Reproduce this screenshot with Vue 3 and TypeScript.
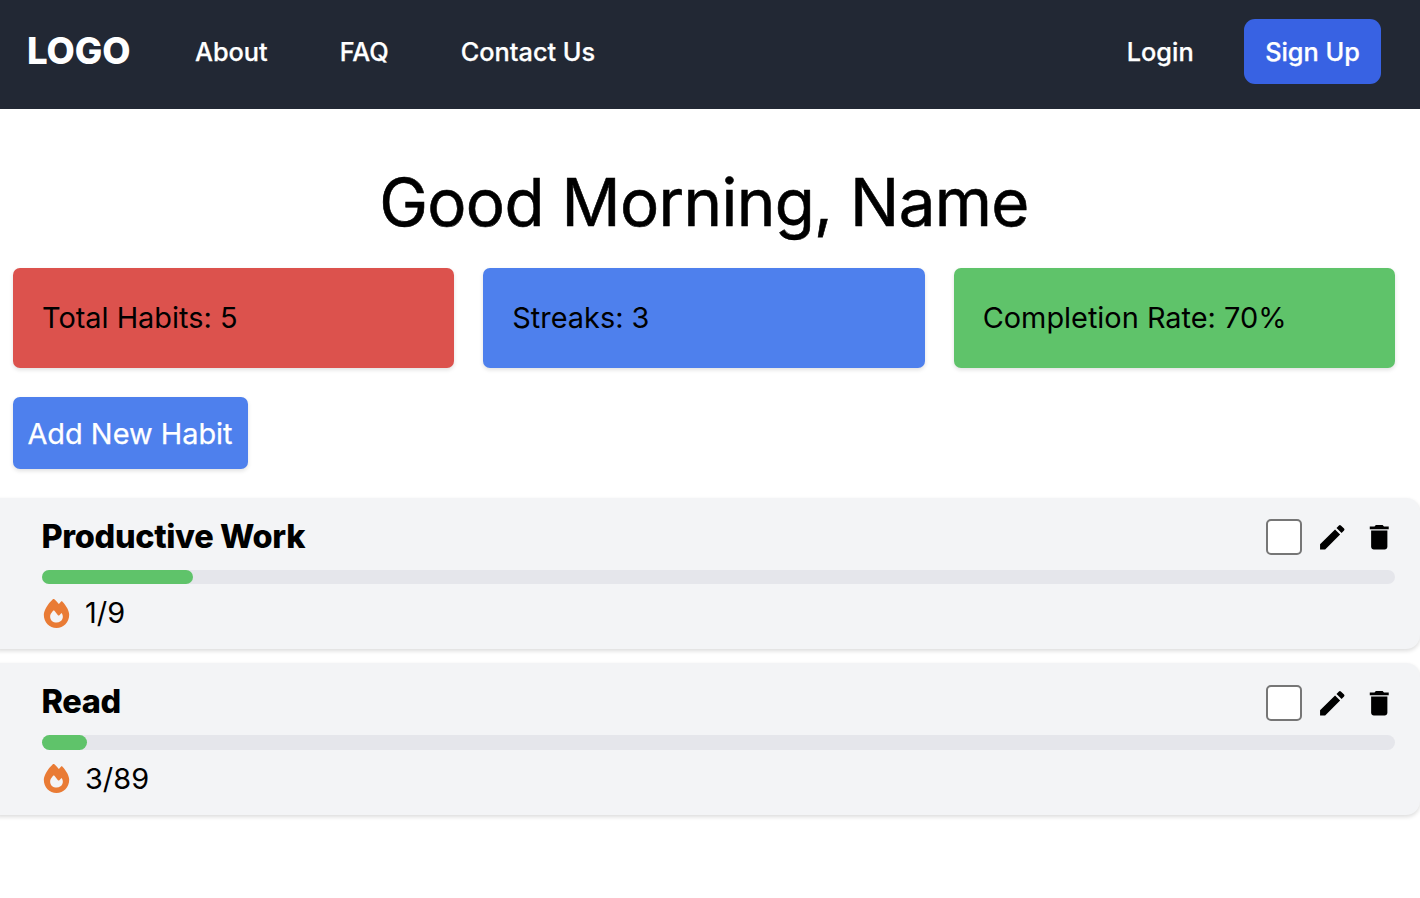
<script setup lang="ts">
interface Stat {
  label: string
  tone: string
}

interface Habit {
  name: string
  done: number
  goal: number
}

const links: string[] = ['About', 'FAQ', 'Contact Us']

const stats: Stat[] = [
  { label: 'Total Habits: 5', tone: 'red' },
  { label: 'Streaks: 3', tone: 'blue' },
  { label: 'Completion Rate: 70%', tone: 'green' },
]

const habits: Habit[] = [
  { name: 'Productive Work', done: 1, goal: 9 },
  { name: 'Read', done: 3, goal: 89 },
]

const progress = (habit: Habit): string => `${Math.floor((habit.done / habit.goal) * 1000) / 10 + 0.05}%`
</script>

<template>
  <div class="page">
    <nav class="navbar">
      <span class="logo">LOGO</span>
      <a v-for="link in links" :key="link" class="nav-link">{{ link }}</a>
      <div class="account">
        <a class="nav-link">Login</a>
        <button class="signup">Sign Up</button>
      </div>
    </nav>

    <main>
      <h1 class="greeting">Good Morning, Name</h1>

      <section class="stats">
        <div v-for="stat in stats" :key="stat.label" class="stat" :class="stat.tone">{{ stat.label }}</div>
      </section>

      <button class="add">Add New Habit</button>

      <section class="habits">
        <article v-for="habit in habits" :key="habit.name" class="habit">
          <header class="habit-head">
            <h2 class="habit-name">{{ habit.name }}</h2>
            <div class="actions">
              <span class="checkbox" role="checkbox" aria-checked="false"></span>
              <svg class="action-icon" viewBox="0 0 24 24">
                <path d="M3 17.25V21h3.75L17.81 9.94l-3.75-3.75L3 17.25zM20.71 7.04a.996.996 0 0 0 0-1.41l-2.34-2.34a.996.996 0 0 0-1.41 0l-1.83 1.83 3.75 3.75 1.83-1.83z" />
              </svg>
              <svg class="action-icon" viewBox="0 0 24 24">
                <path d="M6 19c0 1.1.9 2 2 2h8c1.1 0 2-.9 2-2V7H6v12zM19 4h-3.500l-1-1h-5l-1 1H5v2h14V4z" />
              </svg>
            </div>
          </header>
          <div class="track"><div class="fill" :style="{ width: progress(habit) }"></div></div>
          <div class="streak">
            <svg class="flame" viewBox="0 0 448 512">
              <path d="M159.300 5.400c7.800-7.300 19.900-7.200 27.700.1 27.600 25.900 53.500 53.800 77.700 84 11-14.400 23.500-30.100 37-42.900 7.900-7.400 20.100-7.400 28 .1 34.600 33 63.900 76.600 84.500 118 20.300 40.800 33.800 82.500 33.800 111.900C448 404.200 348.200 512 224 512 98.400 512 0 404.100 0 276.500c0-38.400 17.800-85.300 45.400-131.700C73.300 97.700 112.700 48.600 159.300 5.400zM225.700 416c25.300 0 47.700-7 68.800-21 42.100-29.400 53.400-88.200 28.100-134.400-4.500-9-16-9.600-22.500-2l-25.200 29.300c-6.600 7.600-18.500 7.400-24.700-.5-16.500-21-46-58.500-62.800-79.800-6.300-8-18.300-8.100-24.700-.1-33.800 42.500-50.800 69.300-50.800 99.400 0 68.500 50.600 109.100 113.800 109.100z" />
            </svg>
            <span>{{ habit.done }}/{{ habit.goal }}</span>
          </div>
        </article>
      </section>
    </main>
  </div>
</template>

<style>
body {
  margin: 0;
  background: #fff;
  overflow: hidden;
}
</style>

<style scoped>
.page {
  height: 898px;
  overflow: hidden;
  font-family: Inter, sans-serif;
  font-size: 28.9px;
  line-height: 43.4px;
  color: #000;
}

.navbar {
  box-sizing: border-box;
  height: 109px;
  padding: 19px 39px 25px 27px;
  display: flex;
  align-items: center;
  background: #222834;
  color: #fff;
}

.logo {
  font-size: 36.6px;
  font-weight: 800;
  letter-spacing: -0.1px;
  width: 103px;
  margin-right: 65px;
}

.nav-link {
  font-size: 25.3px;
  font-weight: 500;
  margin-right: 72px;
  -webkit-text-stroke: 0.25px currentColor;
}

.account {
  margin-left: auto;
  display: flex;
  align-items: center;
}

.account .nav-link {
  margin-right: 50.4px;
}

.signup {
  height: 65px;
  width: 137px;
  padding: 0;
  border: 0;
  border-radius: 11px;
  background: #3862e3;
  color: #fff;
  font: 500 25.3px Inter, sans-serif;
  -webkit-text-stroke: 0.25px currentColor;
}

.greeting {
  margin: 58px 12px 29px 0;
  font-size: 65.4px;
  font-weight: 400;
  letter-spacing: -0.65px;
  line-height: 72px;
  text-align: center;
  -webkit-text-stroke: 0.6px currentColor;
}

.stats {
  display: grid;
  grid-template-columns: repeat(3, 1fr);
  gap: 29px;
  margin: 0 25px 29px 13px;
}

.stat {
  box-sizing: border-box;
  height: 100px;
  padding: 28px 29px;
  border-radius: 7px;
  box-shadow: 0 2px 4px rgba(0, 0, 0, 0.12);
}

.red {
  background: #dc524d;
}

.blue {
  background: #4e80ed;
}

.green {
  background: #5fc36a;
}

.add {
  display: block;
  width: 235px;
  height: 72px;
  margin: 0 0 28.6px 13px;
  padding: 0 1px 0 0;
  border: 0;
  border-radius: 7px;
  background: #4e80ed;
  box-shadow: 0 2px 4px rgba(0, 0, 0, 0.12);
  color: #fff;
  font: 400 28.9px Inter, sans-serif;
  -webkit-text-stroke: 0.25px currentColor;
}

.habits {
  display: flex;
  flex-direction: column;
  gap: 14px;
}

.habit {
  box-sizing: border-box;
  height: 151.500px;
  margin-left: -15px;
  padding: 14px 25px 14px 57px;
  border-radius: 14px;
  background: #f3f4f6;
  box-shadow: 0 2px 4px rgba(0, 0, 0, 0.14);
}

.habit-head {
  display: flex;
  justify-content: space-between;
  height: 50px;
  margin-bottom: 8px;
}

.habit-name {
  margin: 0 0 0 -0.5px;
  font-size: 32.5px;
  font-weight: 800;
  letter-spacing: -0.35px;
  line-height: 50px;
}

.actions {
  display: flex;
  align-items: center;
  gap: 14.500px;
  height: 51.8px;
}

.checkbox {
  box-sizing: border-box;
  width: 36px;
  height: 36px;
  margin-right: -0.6px;
  border: 2px solid #767676;
  border-radius: 5px;
  background: #fff;
}

.action-icon {
  width: 32.500px;
  height: 32.500px;
  fill: #000;
}

.track {
  height: 14.500px;
  border-radius: 8px;
  background: #e5e6eb;
}

.fill {
  height: 100%;
  border-radius: 8px;
  background: #5fc36a;
}

.streak {
  display: flex;
  align-items: center;
  margin-top: 7.3px;
}

.flame {
  width: 29px;
  height: 29px;
  margin-right: 14px;
  fill: #e97b35;
}
</style>
